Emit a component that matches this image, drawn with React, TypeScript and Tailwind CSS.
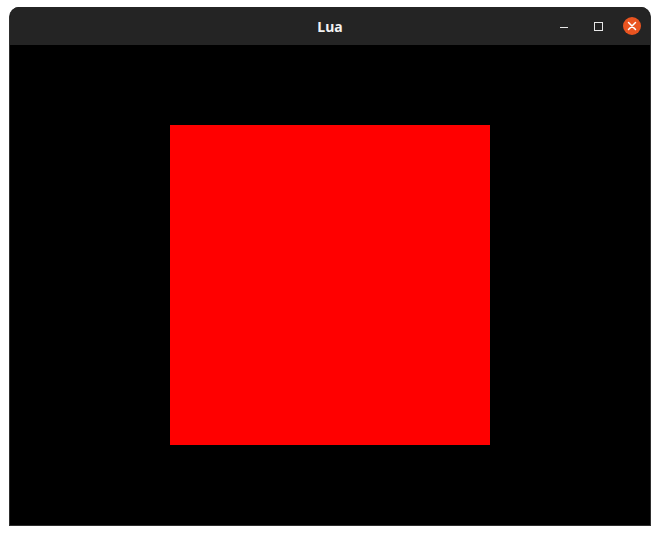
export default function App() {
  return (
    <div className="h-[535px] w-[660px] bg-white pl-[9px] pt-[7px]">
      <div className="w-[642px] overflow-hidden rounded-t-[10px] border border-t-0 border-[#2e2e2e] bg-black">
        {/* header bar */}
        <div className="relative flex h-[38px] items-center justify-center bg-[#242424]">
          <span className="font-['Noto_Sans',sans-serif] text-[14px] font-bold text-[#f2f2f2]">Lua</span>
          <div className="absolute right-[9px] top-0 flex h-full items-center">
            <div className="flex w-[34px] justify-center pt-[3px]">
              <div className="h-px w-[8px] bg-[#e8e8e8]" />
            </div>
            <div className="flex w-[34px] justify-center">
              <div className="h-[9px] w-[9px] border border-[#e8e8e8]" />
            </div>
            <div className="ml-[8px] flex h-[18px] w-[18px] items-center justify-center rounded-full bg-[#e95420]">
              <svg width="10" height="10" viewBox="0 0 10 10">
                <path d="M1.5 1.5 L8.5 8.5 M8.5 1.5 L1.5 8.5" stroke="#ffffff" strokeWidth="1.5" strokeLinecap="round" />
              </svg>
            </div>
          </div>
        </div>
        {/* canvas */}
        <div className="h-[480px] w-[640px] pl-[160px] pt-[80px]">
          <div className="h-[320px] w-[320px] bg-[#ff0000]" />
        </div>
      </div>
    </div>
  );
}
